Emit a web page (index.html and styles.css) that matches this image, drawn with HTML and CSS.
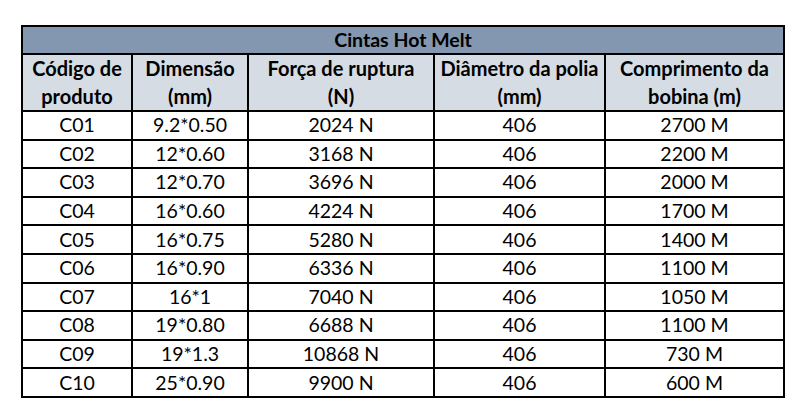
FILE: index.html
```html
<!DOCTYPE html>
<html lang="pt">
<head>
<meta charset="utf-8">
<title>Cintas Hot Melt</title>
<link rel="stylesheet" href="styles.css">
</head>
<body>
<table class="spec">
  <colgroup>
    <col class="c1"><col class="c2"><col class="c3"><col class="c4"><col class="c5">
  </colgroup>
  <thead>
    <tr class="title"><th colspan="5">Cintas Hot Melt</th></tr>
    <tr class="head">
      <th>Código de<br>produto</th>
      <th>Dimensão<br>(mm)</th>
      <th>Força de ruptura<br>(N)</th>
      <th>Diâmetro da polia<br>(mm)</th>
      <th>Comprimento da<br>bobina (m)</th>
    </tr>
  </thead>
  <tbody>
    <tr><td>C01</td><td>9.2*0.50</td><td>2024 N</td><td>406</td><td>2700 M</td></tr>
    <tr><td>C02</td><td>12*0.60</td><td>3168 N</td><td>406</td><td>2200 M</td></tr>
    <tr><td>C03</td><td>12*0.70</td><td>3696 N</td><td>406</td><td>2000 M</td></tr>
    <tr><td>C04</td><td>16*0.60</td><td>4224 N</td><td>406</td><td>1700 M</td></tr>
    <tr><td>C05</td><td>16*0.75</td><td>5280 N</td><td>406</td><td>1400 M</td></tr>
    <tr><td>C06</td><td>16*0.90</td><td>6336 N</td><td>406</td><td>1100 M</td></tr>
    <tr><td>C07</td><td>16*1</td><td>7040 N</td><td>406</td><td>1050 M</td></tr>
    <tr><td>C08</td><td>19*0.80</td><td>6688 N</td><td>406</td><td>1100 M</td></tr>
    <tr><td>C09</td><td>19*1.3</td><td>10868 N</td><td>406</td><td>730 M</td></tr>
    <tr><td>C10</td><td>25*0.90</td><td>9900 N</td><td>406</td><td>600 M</td></tr>
  </tbody>
</table>
</body>
</html>
```
FILE: styles.css
```css
html, body {
  margin: 0;
  padding: 0;
  background: #ffffff;
}
body {
  padding: 25px 0 0 21px;
  font-family: Lato, "Liberation Sans", sans-serif;
  color: #000;
}
.spec {
  border-collapse: collapse;
  table-layout: fixed;
  width: 762px;
  border: 2px solid #000;
}
.c1 { width: 110px; }
.c2 { width: 116px; }
.c3 { width: 186px; }
.c4 { width: 171px; }
.c5 { width: 179px; }
.spec th, .spec td {
  border: 2px solid #000;
  padding: 0;
  text-align: center;
  font-size: 19.5px;
  line-height: 26px;
}
.spec th { font-weight: 700; }
.spec td { font-weight: 400; height: 26.6px; }
.title th {
  background: #8497b0;
  height: 26px;
}
.head th {
  background: #d6dce4;
  font-size: 20px;
  line-height: 27.5px;
}
```
